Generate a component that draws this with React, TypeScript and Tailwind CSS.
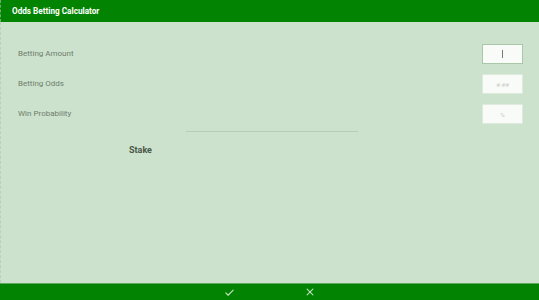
import React from 'react';

const rows = [
  { label: 'Betting Amount', placeholder: '', focused: true },
  { label: 'Betting Odds', placeholder: '#.##', focused: false },
  { label: 'Win Probability', placeholder: '%', focused: false },
];

const App: React.FC = () => {
  return (
    <div
      className="w-[539px] h-[300px] flex flex-col bg-[#cce2cc] overflow-hidden"
      style={{ fontFamily: 'Roboto, "Liberation Sans", sans-serif' }}
    >
      {/* Header */}
      <div className="h-[22px] bg-[#028402] flex items-center pl-[11px] border-l border-dashed border-[#6fae6f]">
        <span className="text-white text-[8.2px] font-bold">Odds Betting Calculator</span>
      </div>

      {/* Body */}
      <div className="flex-1 flex flex-col pt-[17px] border-l border-dashed border-[#b8d2b8]">
        {rows.map((row) => (
          <div key={row.label} className="h-[30px] flex items-center justify-between pl-[17px] pr-[16px]">
            <span className="text-[8px] text-[#6e7d6e]">{row.label}</span>
            <div
              className={`w-[41px] h-[20px] bg-[#f8fbf8] flex items-center justify-center text-[6px] text-[#c5cec5] ${
                row.focused ? 'border border-[#a9c7a9]' : 'border border-[#ddeadd]'
              }`}
            >
              {row.focused ? <span className="w-px h-[8px] bg-[#777]" /> : row.placeholder}
            </div>
          </div>
        ))}

        <div className="ml-[185px] w-[172px] h-px bg-[#b5cdb5] mt-[2px]" />

        <div className="pl-[128px] pt-[4px]">
          <span className="text-[9px] font-bold text-[#4a584a]">Stake</span>
        </div>
      </div>

      {/* Footer */}
      <div className="h-[17px] bg-[#028402] border-t border-[#5fa85f] flex items-center justify-center gap-[70px]">
        <svg width="11" height="11" viewBox="0 0 24 24" fill="none" stroke="#b9e3b9" strokeWidth="2.5" strokeLinecap="round" strokeLinejoin="round">
          <path d="M4 13l5 5L20 7" />
        </svg>
        <svg width="10" height="10" viewBox="0 0 24 24" fill="none" stroke="#b9e3b9" strokeWidth="2.5" strokeLinecap="round">
          <path d="M5 5l14 14M19 5L5 19" />
        </svg>
      </div>
    </div>
  );
};

export default App;
